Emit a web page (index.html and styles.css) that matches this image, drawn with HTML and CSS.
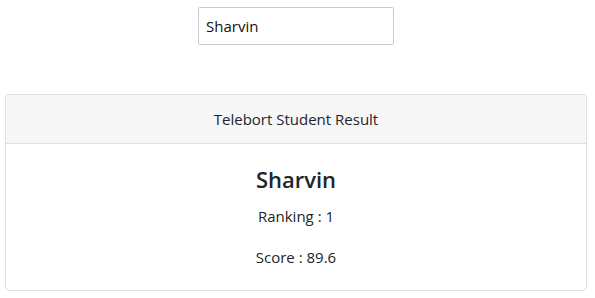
FILE: index.html
```html
<!DOCTYPE html>
<html lang="en">
<head>
  <meta charset="UTF-8">
  <meta name="viewport" content="width=device-width, initial-scale=1.0">
  <title>Telebort Student Result</title>
  <link rel="stylesheet" href="styles.css">
</head>
<body>
<div class="search">
  <input class="name-input" type="text" value="Sharvin">
</div>
<div class="card">
  <div class="card-header">Telebort Student Result</div>
  <div class="card-body">
    <h2 class="student">Sharvin</h2>
    <p class="line">Ranking : 1</p>
    <p class="line">Score : 89.6</p>
  </div>
</div>
</body>
</html>
```
FILE: styles.css
```css
* {
  box-sizing: border-box;
}
body {
  margin: 0;
  padding: 7px 8px 0 5px;
  font-family: "Open Sans", "Noto Sans", sans-serif;
  color: #212529;
  background-color: #fff;
}
.search {
  display: flex;
  justify-content: center;
}
.name-input {
  width: 196px;
  height: 38px;
  padding: 0 7px;
  border: 1px solid #ccc;
  border-radius: 2px;
  font-family: inherit;
  font-size: 15px;
  color: #111;
  outline: none;
}
.card {
  margin-top: 49px;
  border: 1px solid #dfdfdf;
  border-radius: 4px;
  overflow: hidden;
}
.card-header {
  height: 49px;
  display: flex;
  align-items: center;
  justify-content: center;
  background-color: #f7f7f7;
  border-bottom: 1px solid #dfdfdf;
  font-size: 15px;
}
.card-body {
  height: 146px;
  display: flex;
  flex-direction: column;
  align-items: center;
  padding-top: 19px;
}
.student {
  margin: 0;
  font-size: 22px;
  font-weight: 600;
  line-height: 32px;
}
.line {
  margin: 0;
  font-size: 15px;
  line-height: 21px;
}
.line + .line {
  margin-top: 20px;
}
.student + .line {
  margin-top: 11px;
}
```
